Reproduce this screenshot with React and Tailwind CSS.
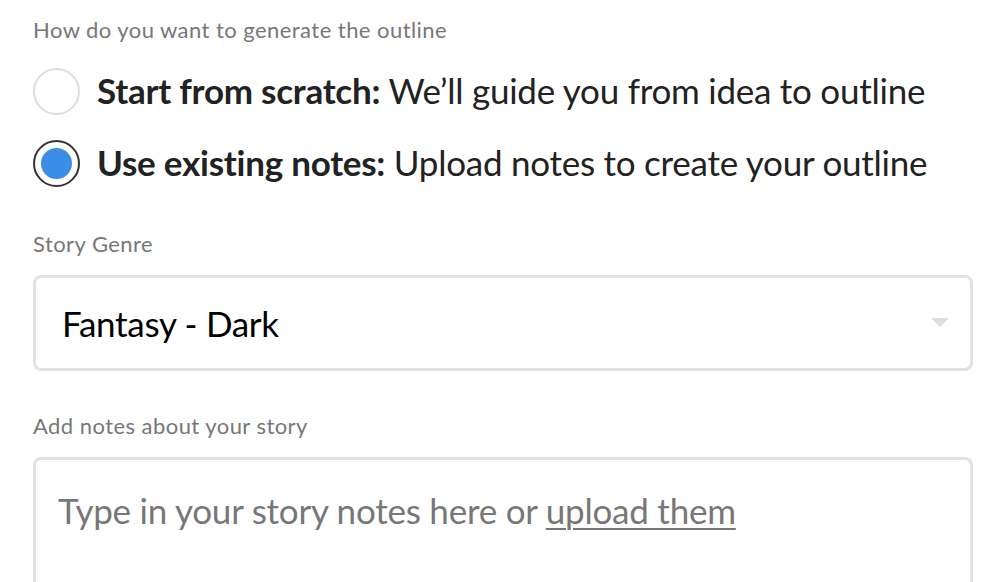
import { useState } from 'react'

export default function App() {
  const [mode, setMode] = useState('existing')

  return (
    <main className="min-h-screen bg-white font-['Lato','Noto_Sans',sans-serif] pl-[33px] pr-[19px] pt-[18px]">
      <div className="text-[22px] leading-[24px] tracking-[0.45px] text-[#777]">How do you want to generate the outline</div>

      {/* Radio options */}
      <div className="mt-[26px] flex flex-col gap-[25px]">
        <button onClick={() => setMode('scratch')} className="flex items-center gap-[17px] text-left">
          <span className={`w-[47px] h-[47px] rounded-full border-2 flex items-center justify-center shrink-0 ${mode === 'scratch' ? 'border-[#333]' : 'border-[#ddd]'}`}>
            {mode === 'scratch' && <span className="w-[31px] h-[31px] rounded-full bg-[#3a8ee6]" />}
          </span>
          <span className="pb-[4px] text-[35px] leading-[40px] tracking-[-0.25px] text-[#222]">
            <b className="font-bold">Start from scratch:</b> We’ll guide you from idea to outline
          </span>
        </button>
        <button onClick={() => setMode('existing')} className="flex items-center gap-[17px] text-left">
          <span className={`w-[47px] h-[47px] rounded-full border-2 flex items-center justify-center shrink-0 ${mode === 'existing' ? 'border-[#333]' : 'border-[#ddd]'}`}>
            {mode === 'existing' && <span className="w-[31px] h-[31px] rounded-full bg-[#3a8ee6]" />}
          </span>
          <span className="pb-[4px] text-[35px] leading-[40px] tracking-[-0.25px] text-[#222]">
            <b className="font-bold">Use existing notes:</b> Upload notes to create your outline
          </span>
        </button>
      </div>

      {/* Genre */}
      <div className="mt-[45px] text-[22px] leading-[24px] tracking-[0.45px] text-[#777]">Story Genre</div>
      <div className="mt-[19px] h-[96px] border-[3px] border-[#e2e2e2] rounded-[8px] flex items-center justify-between pl-[26px] pr-[21px]">
        <span className="text-[35px] leading-[40px] tracking-[-0.3px] text-black">Fantasy - Dark</span>
        <svg width="18" height="10" viewBox="0 0 18 10">
          <path d="M0 0h18L9 9z" fill="#ddd" />
        </svg>
      </div>

      {/* Notes */}
      <div className="mt-[43px] text-[22px] leading-[24px] tracking-[0.45px] text-[#777]">Add notes about your story</div>
      <div className="mt-[19px] h-[200px] border-[3px] border-[#e2e2e2] rounded-[8px] pl-[22px] pt-[30px]">
        <span className="text-[35px] leading-[40px] tracking-[-0.23px] text-[#777]">
          Type in your story notes here or <span className="underline underline-offset-4 decoration-2">upload them</span>
        </span>
      </div>
    </main>
  )
}
